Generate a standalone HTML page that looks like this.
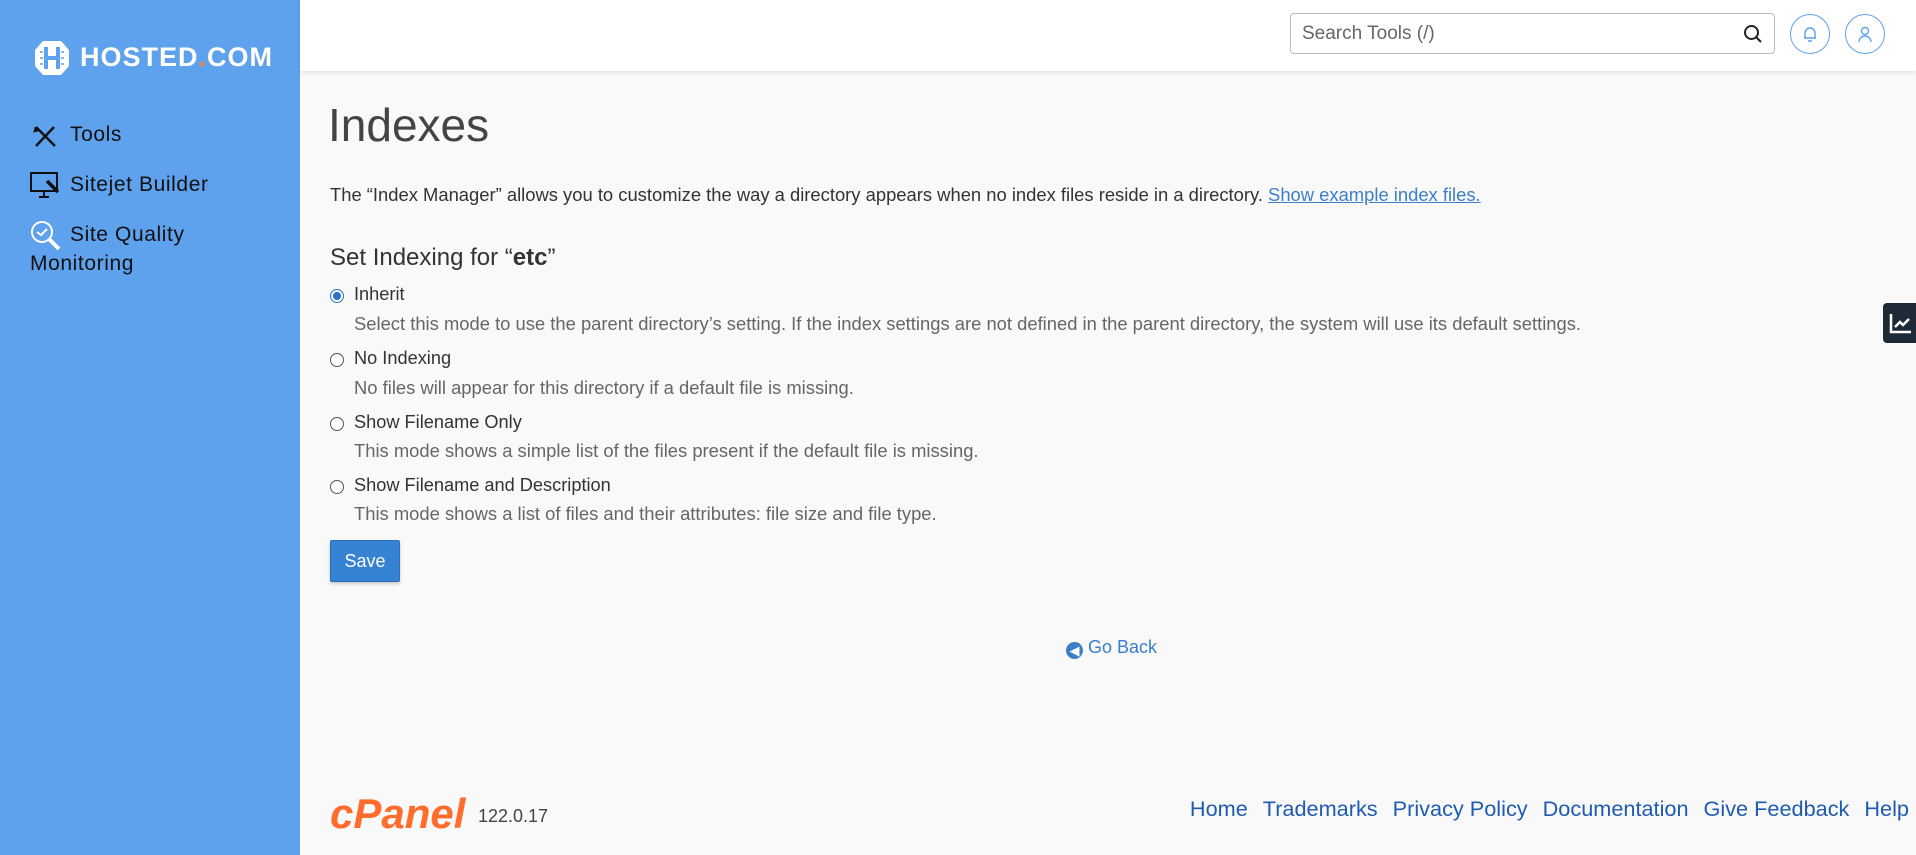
<!DOCTYPE html>
<html><head><meta charset="utf-8"><style>
*{box-sizing:border-box;margin:0;padding:0}
body{width:1916px;height:855px;overflow:hidden;background:#f9f9f9;font-family:"Liberation Sans",sans-serif;color:#333;position:relative}
#side{position:absolute;left:0;top:0;width:300px;height:855px;background:#5ea1ec}
#hdr{position:absolute;left:300px;top:0;right:0;height:71px;background:#fff;box-shadow:0 2px 4px rgba(0,0,0,.08)}
.menu{position:absolute;left:30px;font-size:21px;color:#111;letter-spacing:.6px}
.abs{position:absolute}
.rad{position:absolute;left:330px;width:14px;height:14px;border:1px solid #555;border-radius:50%;background:#fff}
.lab{position:absolute;left:354px;font-size:18.2px;color:#333}
.desc{position:absolute;left:354px;font-size:18.4px;color:#666}
.foot a{color:#1f5bb0;text-decoration:none;margin-left:15px}
</style></head><body>
<div id="side">
 <svg class="abs" style="left:33px;top:39px" width="38" height="38" viewBox="0 0 38 38"><path d="M10 2h18l8 9v16l-8 9H10l-8-9V11z" fill="#fff"/><path d="M13 8v22M25 8v22M13 19h12" stroke="#5ea1ec" stroke-width="4"/><path d="M7 13h3M7 19h3M7 25h3M28 13h3M28 19h3M28 25h3" stroke="#5ea1ec" stroke-width="1.5"/></svg>
 <div class="abs" style="left:80px;top:42px;font-size:27px;font-weight:bold;color:#fff;letter-spacing:1px">HOSTED<span style="color:#f5863c">.</span>COM</div>
 <svg class="abs" style="left:33px;top:125px" width="24" height="22" viewBox="0 0 24 22"><path d="M3 2l19 19M21 2L3 21M3 2l-1 4 4-1" stroke="#111" stroke-width="2.4" fill="none"/></svg>
 <div class="menu" style="top:123px;left:70px">Tools</div>
 <svg class="abs" style="left:30px;top:171px" width="32" height="30" viewBox="0 0 32 30"><rect x="1" y="2" width="26" height="18" fill="none" stroke="#111" stroke-width="2"/><path d="M9 26h10M14 20v6" stroke="#111" stroke-width="2"/><path d="M17 10l11 11" stroke="#111" stroke-width="3.5"/></svg>
 <div class="menu" style="top:173px;left:70px">Sitejet Builder</div>
 <svg class="abs" style="left:30px;top:220px" width="32" height="32" viewBox="0 0 32 32"><circle cx="12" cy="12" r="10" fill="none" stroke="#fff" stroke-width="2"/><path d="M7 12l4 3 6-6" stroke="#fff" stroke-width="2" fill="none"/><path d="M19 19l10 10" stroke="#fff" stroke-width="4"/></svg>
 <div class="menu" style="top:223px;left:70px">Site Quality</div>
 <div class="menu" style="top:252px">Monitoring</div>
</div>
<div id="hdr"></div>
<div class="abs" style="left:1290px;top:13px;width:485px;height:41px;border:1px solid #bbb;border-radius:4px;background:#fff;font-size:19px;color:#666;padding:9px 11px">Search Tools (/)</div>
<svg class="abs" style="left:1743px;top:24px" width="20" height="20" viewBox="0 0 20 20"><circle cx="8.5" cy="8.5" r="6.5" fill="none" stroke="#222" stroke-width="2"/><path d="M13 13l5 5" stroke="#222" stroke-width="2"/></svg>
<div class="abs" style="left:1790px;top:14px;width:40px;height:40px;border:1.5px solid #5ea1ec;border-radius:50%"></div>
<svg class="abs" style="left:1800px;top:24px" width="20" height="20" viewBox="0 0 20 20"><path d="M5 14V9a5 5 0 0110 0v5zM4 14h12M8 17h4" fill="none" stroke="#5ea1ec" stroke-width="1.4"/></svg>
<div class="abs" style="left:1845px;top:14px;width:40px;height:40px;border:1.5px solid #5ea1ec;border-radius:50%"></div>
<svg class="abs" style="left:1855px;top:24px" width="20" height="20" viewBox="0 0 20 20"><circle cx="10" cy="7" r="3.5" fill="none" stroke="#5ea1ec" stroke-width="1.4"/><path d="M4 18a6 6 0 0112 0" fill="none" stroke="#5ea1ec" stroke-width="1.4"/></svg>

<div class="abs" style="left:328px;top:98px;font-size:46px;font-weight:300;color:#444">Indexes</div>
<div class="abs" style="left:330px;top:184px;font-size:18.4px;color:#333">The “Index Manager” allows you to customize the way a directory appears when no index files reside in a directory. <span style="color:#3a7fc8;text-decoration:underline">Show example index files.</span></div>
<div class="abs" style="left:330px;top:244px;font-size:24px;color:#333">Set Indexing for “<b>etc</b>”</div>
<div class="rad" style="top:289px;border-color:#2a72c9"><div style="margin:2px;width:8px;height:8px;border-radius:50%;background:#2a72c9"></div></div>
<div class="lab" style="top:284px">Inherit</div>
<div class="desc" style="top:313px">Select this mode to use the parent directory’s setting. If the index settings are not defined in the parent directory, the system will use its default settings.</div>
<div class="rad" style="top:353px"></div>
<div class="lab" style="top:348px">No Indexing</div>
<div class="desc" style="top:377px">No files will appear for this directory if a default file is missing.</div>
<div class="rad" style="top:417px"></div>
<div class="lab" style="top:412px">Show Filename Only</div>
<div class="desc" style="top:440px">This mode shows a simple list of the files present if the default file is missing.</div>
<div class="rad" style="top:480px"></div>
<div class="lab" style="top:475px">Show Filename and Description</div>
<div class="desc" style="top:503px">This mode shows a list of files and their attributes: file size and file type.</div>
<div class="abs" style="left:330px;top:540px;width:70px;height:42px;background:#3583d2;border:1px solid #2a6fb8;border-radius:2px;box-shadow:0 2px 3px rgba(0,0,0,.2);color:#fff;font-size:18px;text-align:center;line-height:40px">Save</div>
<div class="abs" style="left:1066px;top:637px;font-size:18px;color:#3a7fc8"><span style="display:inline-block;width:17px;height:17px;border-radius:50%;background:#3a7fc8;color:#fff;font-size:13px;line-height:17px;text-align:center;vertical-align:-2px">◀</span> Go Back</div>
<div class="abs" style="left:1883px;top:303px;width:33px;height:40px;background:#1e2a38;border-radius:4px 0 0 4px"></div>
<svg class="abs" style="left:1889px;top:312px" width="24" height="22" viewBox="0 0 24 22"><path d="M2 2v18h20" fill="none" stroke="#fff" stroke-width="2.5"/><path d="M6 15l5-5 3 3 6-6" fill="none" stroke="#fff" stroke-width="2.5"/></svg>
<div class="abs" style="left:330px;top:790px;font-size:42px;font-weight:bold;font-style:italic;color:#ff6c2c;letter-spacing:0px">cPanel</div>
<div class="abs" style="left:478px;top:806px;font-size:18px;color:#444">122.0.17</div>
<div class="abs foot" style="right:7px;top:796px;font-size:21.7px"><a>Home</a><a>Trademarks</a><a>Privacy Policy</a><a>Documentation</a><a>Give Feedback</a><a>Help</a></div>
</body></html>
